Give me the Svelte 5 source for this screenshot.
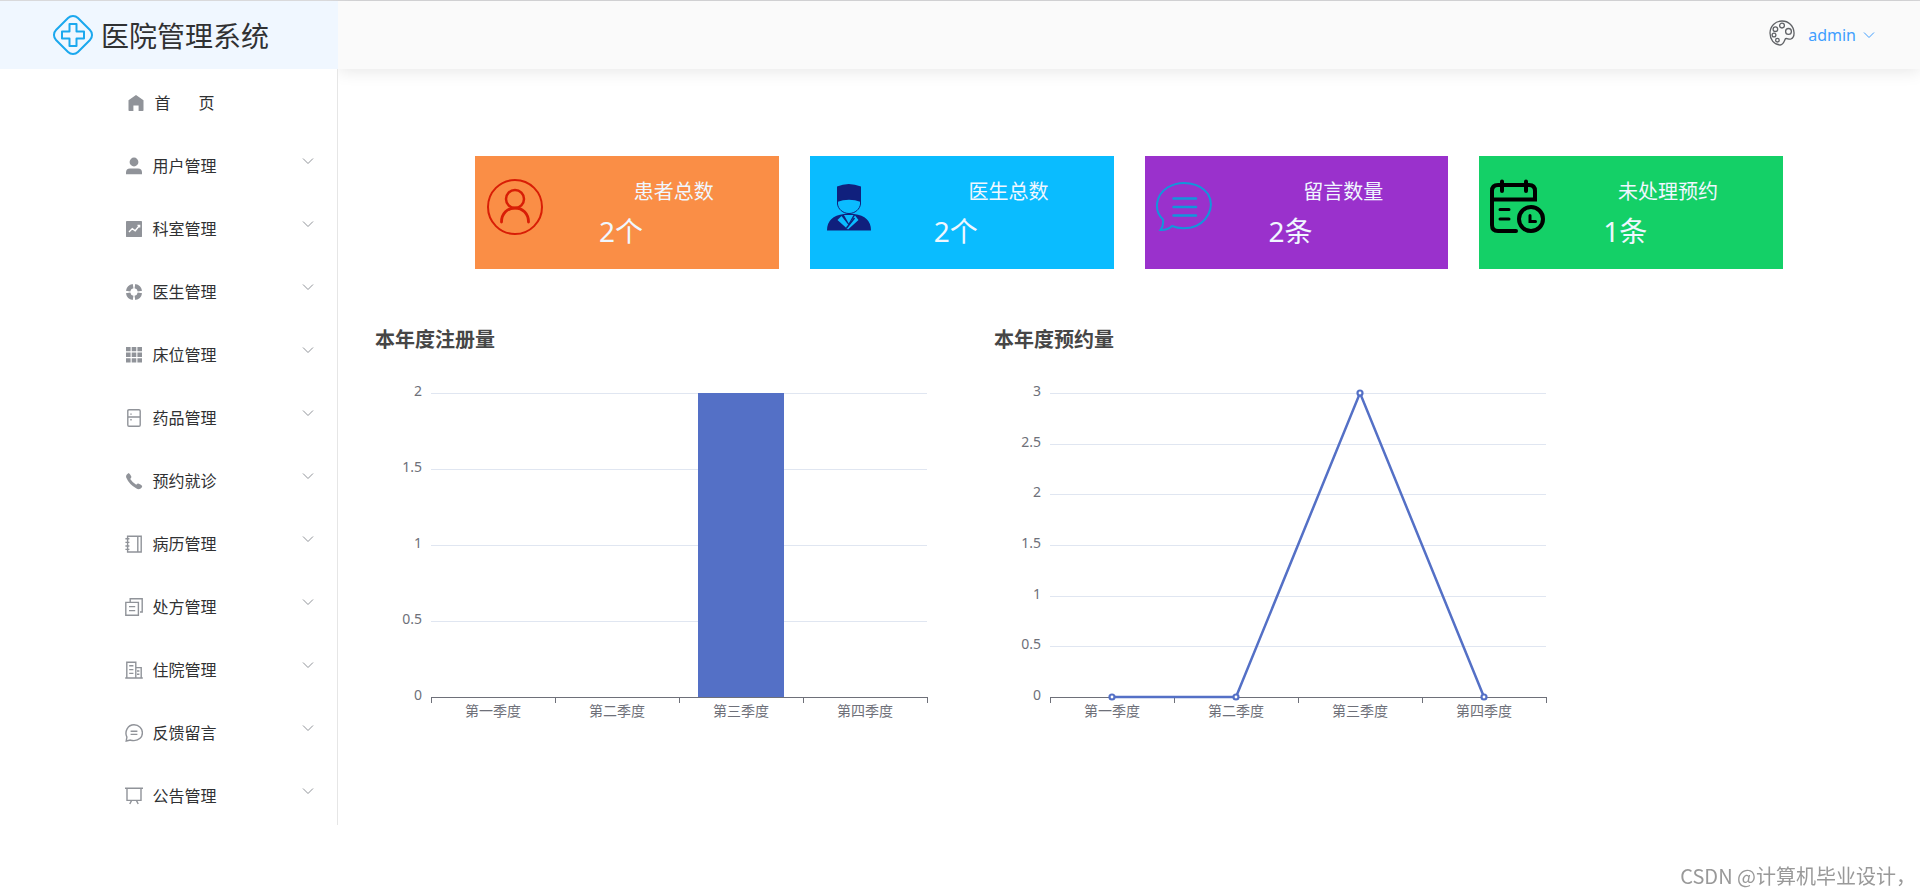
<script>
  const icons = {
    home: { fill: "M9 1L16.5 6.3V16.2Q16.5 17 15.7 17H11.6V11.6H6.4V17H2.3Q1.5 17 1.5 16.2V6.3Z" },
    user: { fill: "M9 .6A4.4 4.4 0 1 1 9 9.4A4.4 4.4 0 1 1 9 .6ZM1 17.2V15.4Q1 11.4 5 11.4H13Q17 11.4 17 15.4V17.2Z" },
    data: { fill: "M1.4 1H16.6Q17 1 17 1.4V16.6Q17 17 16.6 17H1.4Q1 17 1 16.6V1.4Q1 1 1.4 1Z", light: "M4 12L7.3 8.6L10.2 10.7L14.3 5.8M12.5 5.4H14.6V7.4" },
    help: { ring: "M9.9 3.1A6 6 0 0 1 14.9 8.1M14.9 9.9A6 6 0 0 1 9.9 14.9M8.1 14.9A6 6 0 0 1 3.1 9.9M3.1 8.1A6 6 0 0 1 8.1 3.1" },
    grid: { fill: "M1 1H5.6V5.3H1ZM6.7 1H11.3V5.3H6.7ZM12.4 1H17V5.3H12.4ZM1 6.6H5.6V10.9H1ZM6.7 6.6H11.3V10.9H6.7ZM12.4 6.6H17V10.9H12.4ZM1 12.2H5.6V16.5H1ZM6.7 12.2H11.3V16.5H6.7ZM12.4 12.2H17V16.5H12.4Z" },
    fridge: { line: "M4 .8H14Q15.2 .8 15.2 2V16Q15.2 17.2 14 17.2H4Q2.8 17.2 2.8 16V2Q2.8 .8 4 .8ZM2.8 8H15.2M6 4.4V5.8M6 10V11.6" },
    phone: { fill: "M3.8 1Q5.6 2.5 6.4 4.8Q6.5 5.5 5.2 7Q7.4 10.4 11.2 12.8Q12.6 11.2 13.2 11.4Q15.8 12.3 17.2 14Q17.4 15.2 15.7 16.4Q13.8 17.8 11.5 16.6Q4.2 12.7 1.2 5.6Q.4 2.6 3.8 1Z" },
    notebook: { line: "M2.6 1.2H16.2V17H2.6ZM12.8 1.2V17M.4 3.8H4.4M.4 7.4H4.4M.4 11H4.4M.4 14.4H4.4" },
    document: { line: "M.8 4.4H13.4V17.2H.8ZM5.2 4.2V.8H17.2V14H15M4 8.6H10.2M4 12.6H10.2" },
    building: { line: "M1.8 17V1.2H10.8V17M10.8 6.6H16.2V17M.2 17H17.8M4.2 4.8H8.4M4.2 8.6H8.4M4.2 12.4H8.4M12 10H14.4M12 13.2H14.4" },
    chat: { line: "M9 .8C14 .8 17.4 4.4 17.4 8.8S14 16.6 9 16.6Q6.8 16.6 5.4 16.1L1.2 17L1.9 13.1C-.8 7.6 2.8 .8 9 .8ZM5.6 7.2H12.4M5.6 10.4H12.4" },
    board: { line: "M0 1.2H18M2 1.2V13.4H16V1.2M6.6 13.4L4.8 17M11.4 13.4L13.2 17" },
  };

  const menus = [
    { name: "用户管理", icon: "user" },
    { name: "科室管理", icon: "data" },
    { name: "医生管理", icon: "help" },
    { name: "床位管理", icon: "grid" },
    { name: "药品管理", icon: "fridge" },
    { name: "预约就诊", icon: "phone" },
    { name: "病历管理", icon: "notebook" },
    { name: "处方管理", icon: "document" },
    { name: "住院管理", icon: "building" },
    { name: "反馈留言", icon: "chat" },
    { name: "公告管理", icon: "board" },
  ];

  const cards = [
    { type: "patient", title: "患者总数", value: "2个" },
    { type: "doctor", title: "医生总数", value: "2个" },
    { type: "message", title: "留言数量", value: "2条" },
    { type: "order", title: "未处理预约", value: "1条" },
  ];

  const quarters = ["第一季度", "第二季度", "第三季度", "第四季度"];
  const charts = [
    { title: "本年度注册量", type: "bar", data: [0, 0, 2, 0], max: 2 },
    { title: "本年度预约量", type: "line", data: [0, 0, 3, 0], max: 3 },
  ];

  // plot area inside the chart svg
  const left = 56;
  const top = 38;
  const width = 496;
  const height = 304;
  const band = width / quarters.length;

  const ticks = (max) => Array.from({ length: max * 2 + 1 }, (_, i) => i / 2);
  const px = (i) => left + band * (i + 0.5);
  const py = (v, max) => top + height - (v / max) * height;
  const lineY = (v, max) => Math.round(py(v, max)) + 0.5;
</script>

{#snippet icon(name)}
  <span class="icon">
    <svg width="18" height="18" viewBox="0 0 18 18" aria-hidden="true">
      {#if icons[name].fill}<path class="fill" d={icons[name].fill} />{/if}
      {#if icons[name].line}<path class="line" d={icons[name].line} />{/if}
      {#if icons[name].ring}<path class="ring" d={icons[name].ring} />{/if}
      {#if icons[name].light}<path class="light" d={icons[name].light} />{/if}
    </svg>
  </span>
{/snippet}

<div class="page">
  <aside>
    <div class="logo">
      <svg width="42" height="42" viewBox="0 0 42 42" aria-hidden="true">
        <rect x="5.5" y="5.5" width="31" height="31" rx="7" transform="rotate(45 21 21)" />
        <path d="M17.5 10H24.5V17.5H32V24.500H24.5V32H17.5V24.500H10V17.5H17.5Z" />
      </svg>
      <h1>医院管理系统</h1>
    </div>
    <nav>
      <a class="item" href="#home">
        <span class="label">
          {@render icon("home")}
          <span class="home"><span>首</span><span>页</span></span>
        </span>
      </a>
      {#each menus as menu}
        <button class="item" type="button">
          <span class="label">
            {@render icon(menu.icon)}
            <span>{menu.name}</span>
          </span>
          <svg class="arrow" width="12" height="12" viewBox="0 0 12 12" aria-hidden="true">
            <path d="M1 3.5L6 8.5L11 3.5" />
          </svg>
        </button>
      {/each}
    </nav>
  </aside>

  <div class="content">
    <header>
      <button class="theme" type="button" aria-label="主题">
        <svg width="26" height="26" viewBox="0 0 26 26">
          <path d="M16.5 18.6C18.5 18 19.5 19.8 22 19C24.6 17.8 25.2 15.5 25 12.5C24.6 5.7 19.6 1 13 1C6.3 1 1 6.2 1 13C1 19.5 5 24.6 11 25C14.5 25.2 15 21.5 16.5 18.6Z" />
          <circle cx="13" cy="5.6" r="2.4" />
          <circle cx="19.5" cy="11.4" r="2.9" />
          <circle cx="6.4" cy="9.2" r="2.3" />
          <circle cx="5" cy="15" r="1.9" />
          <circle cx="8.4" cy="20.2" r="1.8" />
        </svg>
      </button>
      <button class="account" type="button">
        admin
        <svg width="12" height="12" viewBox="0 0 12 12" aria-hidden="true">
          <path d="M1 3.5L6 8.5L11 3.5" />
        </svg>
      </button>
    </header>

    <main>
      <section class="cards">
        {#each cards as card}
          <div class="card {card.type}">
            <svg width="60" height="60" viewBox="0 0 60 60" aria-hidden="true">
              {#if card.type === "patient"}
                <g fill="none" stroke="#d81e06" stroke-linecap="round">
                  <circle cx="30" cy="30" r="27" stroke-width="2" />
                  <circle cx="30" cy="22" r="9" stroke-width="2.5" />
                  <path d="M16.5 45C16.5 36.5 22.5 31 30 31S43.5 36.5 43.5 45" stroke-width="2.8" />
                </g>
              {:else if card.type === "doctor"}
                <path d="M17 9.5Q28.5 4.5 41 9.5V25Q29 20.5 17 25Z" fill="#10207d" />
                <path d="M17.5 24V27C18 32 23 36.5 29 36.5S40 32 40.5 27V24" fill="none" stroke="#10207d" />
                <path d="M7 53.5Q7 39 24 37Q29 36 34 37Q51 39 51 53.5Z" fill="#10207d" />
                <path d="M21.5 39L17.5 43L28 52.5L38.5 43L35 38.5L28.5 48Z" fill="#0abcff" />
                <path d="M24 38L28.7 46.5L33.5 38Z" fill="#0abcff" />
                <path d="M34.5 41L26.5 51" stroke="#10207d" stroke-width="1.5" />
              {:else if card.type === "message"}
                <g fill="none" stroke="#1296db" stroke-width="2">
                  <path d="M5.500 53Q8.800 49 8 42.500C-2 33 1 18 12.500 10.500C26 2.500 45 5.500 53 17C61 31 51 47 36 50.500Q25 52.500 17 49Q12 53.500 5.500 53Z" />
                  <path d="M18.500 21.500H41M18.500 30H41M18.500 38.500H41" stroke-width="2.500" stroke-linecap="round" />
                </g>
              {:else}
                <g fill="none" stroke="#000" stroke-width="4" stroke-linecap="round">
                  <path d="M27 54H9Q3 54 3 48V14Q3 8 9 8H40Q46 8 46 14V22.5H3M13 4.5V14M37 4.5V14" />
                  <path d="M11 32.5H20M11 42H20" stroke-width="3" />
                  <circle cx="42" cy="42" r="12" />
                  <path d="M41 38.5V44.5H46.5" stroke-width="3" />
                </g>
              {/if}
            </svg>
            <div class="info">
              <p class="title">{card.title}</p>
              <p class="value">{card.value}</p>
            </div>
          </div>
        {/each}
      </section>

      <section class="charts">
        {#each charts as chart}
          <div class="chart">
            <h2>{chart.title}</h2>
            <svg width="619" height="380" viewBox="0 0 619 380" role="img" aria-label={chart.title}>
              {#each ticks(chart.max) as tick}
                {#if tick > 0}
                  <line class="split" x1={left} x2={left + width} y1={lineY(tick, chart.max)} y2={lineY(tick, chart.max)} />
                {/if}
                <text class="num" x={left - 9} y={py(tick, chart.max) + 3}>{tick}</text>
              {/each}
              <path class="axis" d="M{left} {top + height + 0.5}H{left + width}" />
              {#each [0, 1, 2, 3, 4] as i}
                <path class="axis" d="M{left + band * i + 0.5} {top + height}v6" />
              {/each}
              {#each quarters as quarter, i}
                <text class="quarter" x={px(i)} y={top + height + 19}>{quarter}</text>
              {/each}
              {#if chart.type === "bar"}
                {#each chart.data as v, i}
                  <rect class="bar" x={px(i) - 43} y={py(v, chart.max)} width="86" height={(v / chart.max) * height} />
                {/each}
              {:else}
                <polyline class="series" points={chart.data.map((v, i) => `${px(i)},${py(v, chart.max)}`).join(" ")} />
                {#each chart.data as v, i}
                  <circle class="dot" cx={px(i)} cy={py(v, chart.max)} r="2.5" />
                {/each}
              {/if}
            </svg>
          </div>
        {/each}
      </section>
    </main>
  </div>
  <div class="watermark">CSDN @计算机毕业设计，</div>
</div>

<style>
  :global(body) {
    margin: 0;
    background: #fff;
  }
  .page {
    display: flex;
    align-items: flex-start;
    border-top: 1px solid #d9d9db;
    font-family: "Noto Sans", "Noto Sans CJK SC", sans-serif;
    color: #303133;
  }
  h1,
  h2,
  p {
    margin: 0;
    font-weight: 400;
  }
  button {
    border: 0;
    padding: 0;
    background: none;
    font-family: inherit;
    cursor: pointer;
  }
  aside {
    width: 338px;
    flex-shrink: 0;
    position: relative;
    z-index: 1;
    background: #fff;
  }
  .logo {
    display: flex;
    align-items: center;
    gap: 7px;
    height: 68px;
    padding-left: 52px;
    background: #f0f7ff;
  }
  .logo svg {
    overflow: visible;
    fill: none;
    stroke: #1ba8ee;
    stroke-width: 2;
    stroke-linejoin: round;
  }
  .logo h1 {
    padding-top: 2px;
    font-size: 28px;
    line-height: 40px;
  }
  nav {
    border-right: 1px solid #e6e6e6;
  }
  .item {
    display: grid;
    grid-template-columns: 1fr auto 1fr;
    align-items: center;
    box-sizing: border-box;
    width: 100%;
    height: 63px;
    padding-right: 23px;
    padding-left: 25px;
    color: #303133;
    font-size: 16px;
    line-height: 24px;
    text-decoration: none;
  }
  .label {
    grid-column: 2;
    display: flex;
    align-items: center;
    gap: 6px;
    padding-top: 4px;
  }
  .home {
    display: flex;
    gap: 28px;
  }
  .icon {
    display: flex;
    justify-content: center;
    width: 24px;
  }
  .fill {
    fill: #909399;
  }
  .line,
  .ring,
  .light {
    fill: none;
    stroke: #909399;
    stroke-width: 1.4;
  }
  .ring {
    stroke-width: 4.4;
  }
  .light {
    stroke: #fff;
  }
  .arrow {
    justify-self: end;
    margin-bottom: 5px;
    fill: none;
    stroke: #909399;
  }
  .content {
    flex: 1;
    min-width: 0;
  }
  header {
    display: flex;
    align-items: center;
    justify-content: flex-end;
    gap: 13px;
    height: 68px;
    padding-right: 45px;
    background: #fafafa;
    box-shadow: 0 2px 16px rgba(0, 0, 0, 0.1);
  }
  .theme {
    display: flex;
    padding-bottom: 4px;
  }
  .theme svg {
    fill: none;
    stroke: #606266;
    stroke-width: 1.3;
  }
  .account {
    display: flex;
    align-items: center;
    gap: 7px;
    color: #409eff;
    font-size: 16px;
    line-height: 24px;
  }
  .account svg {
    fill: none;
    stroke: #409eff;
  }
  main {
    padding: 87px 37px 0;
  }
  .cards {
    display: flex;
    gap: 31px;
    padding: 0 100px;
  }
  .card {
    flex: 1;
    display: flex;
    align-items: flex-start;
    box-sizing: border-box;
    height: 113px;
    padding: 21px 65px 0 10px;
    color: #f0f7ff;
  }
  .patient {
    background: #fa8e46;
  }
  .doctor {
    background: #0abcff;
  }
  .message {
    background: #9a31cc;
  }
  .order {
    background: #14d067;
  }
  .info {
    flex: 1;
    padding-left: 54px;
  }
  .title {
    font-size: 20px;
    line-height: 30px;
    text-align: right;
  }
  .value {
    margin-top: 4px;
    font-size: 28px;
    line-height: 40px;
  }
  .charts {
    display: flex;
    flex-wrap: wrap;
    margin-top: 56px;
  }
  .chart h2 {
    color: #464646;
    font-size: 20px;
    font-weight: 700;
    line-height: 30px;
  }
  .chart svg {
    display: block;
  }
  .split {
    stroke: #e0e6f1;
  }
  .axis {
    stroke: #6e7079;
  }
  .num,
  .quarter {
    fill: #6e7079;
    font-size: 14px;
    text-anchor: end;
  }
  .quarter {
    text-anchor: middle;
  }
  .bar {
    fill: #5470c6;
  }
  .series {
    fill: none;
    stroke: #5470c6;
    stroke-width: 2.5;
  }
  .dot {
    fill: #fff;
    stroke: #5470c6;
    stroke-width: 2.2;
  }
  .watermark {
    position: fixed;
    right: 4px;
    bottom: 4px;
    color: #999;
    font-family: "Noto Sans CJK SC", sans-serif;
    font-size: 20px;
    line-height: 30px;
  }
</style>
